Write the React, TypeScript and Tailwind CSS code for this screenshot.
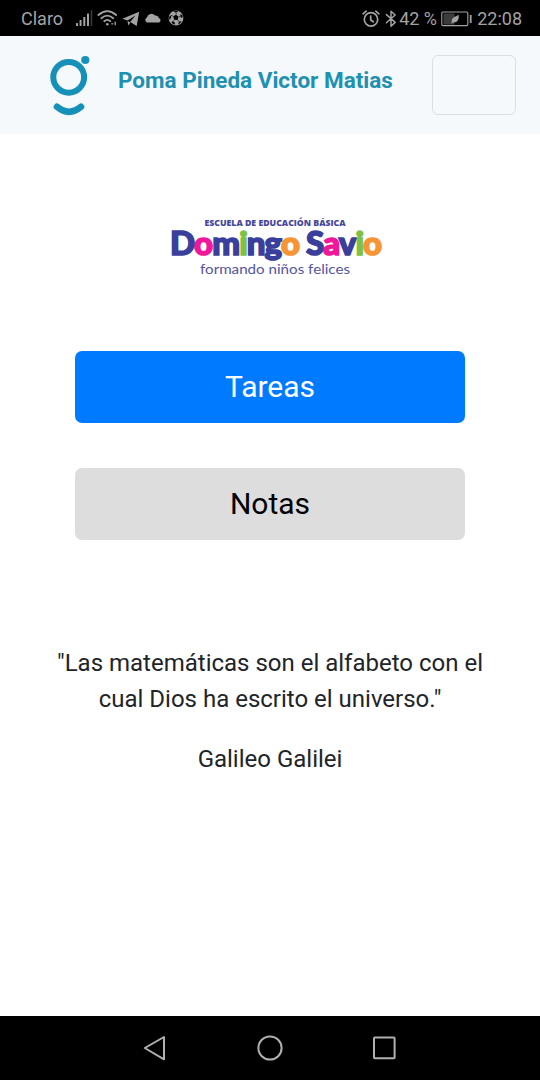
const SCHOOL_LETTERS = [
  { text: 'D', color: 'text-[#3a3f9b]' },
  { text: 'o', color: 'text-[#f0189a]' },
  { text: 'm', color: 'text-[#3a3f9b]' },
  { text: 'i', color: 'text-[#7cc243]' },
  { text: 'ng', color: 'text-[#3a3f9b]' },
  { text: 'o', color: 'text-[#f79433]' },
  { text: ' S', color: 'text-[#3a3f9b]' },
  { text: 'a', color: 'text-[#f0189a]' },
  { text: 'v', color: 'text-[#3a3f9b]' },
  { text: 'i', color: 'text-[#7cc243]' },
  { text: 'o', color: 'text-[#f79433]' },
]

function SignalIcon() {
  return (
    <svg width="18" height="18" viewBox="0 0 18 18" fill="currentColor">
      <rect x="1" y="14" width="2" height="3" rx=".5" />
      <rect x="4.6" y="11" width="2" height="6" rx=".5" />
      <rect x="8.3" y="8" width="2" height="9" rx=".5" />
      <rect x="12" y="4.5" width="2" height="12.5" rx=".5" />
      <rect x="15.7" y="1" width="1.6" height="16" rx=".5" opacity=".35" />
    </svg>
  )
}

function WifiIcon() {
  return (
    <svg width="21" height="18" viewBox="0 0 21 18" fill="none" stroke="currentColor" strokeWidth="1.8" strokeLinecap="round">
      <path d="M1.4 6 Q10.3 -1.8 19.2 6" />
      <path d="M4.4 9.2 Q10.3 4 16.2 9.2" />
      <path d="M7.3 12.2 Q10.3 9.6 13.3 12.2" />
      <circle cx="10.3" cy="15.2" r="1.3" fill="currentColor" stroke="none" />
      <path d="M14.8 14.8 h1 M18.2 13.2 v2.6" strokeWidth="1.3" />
    </svg>
  )
}

function TelegramIcon() {
  return (
    <svg width="18" height="16" viewBox="0 0 18 16" fill="currentColor">
      <path d="M.4 7.7 17.2.7 14.7 15 8.2 10.9 13.4 4.6 5.6 9.6z" />
      <path d="M5.6 9.9 8.4 11.4 6.2 14.6z" />
    </svg>
  )
}

function CloudIcon() {
  return (
    <svg width="18" height="10" viewBox="0 0 18 10" fill="currentColor">
      <path d="M3 9.5A2.7 2.7 0 0 1 2.9 4.5 4.6 4.6 0 0 1 11 2.5a3.2 3.2 0 0 1 3.8 2.6A2.3 2.3 0 0 1 15 9.5z" />
    </svg>
  )
}

function BallIcon() {
  return (
    <svg width="16" height="16" viewBox="0 0 16 16">
      <circle cx="8" cy="8" r="7.4" fill="currentColor" />
      <g fill="#000">
        <path d="M5.2 6.2 8.1 4.8 10.5 6.8 9.6 9.9 6.2 9.8z" />
        <path d="M5 1.6 8 2.4 10.5 1.2 8 .8zM12.3 4.1 14.7 5.5 14.2 8.2 12.4 6.8zM11 11.8 13.5 11 12.2 13.3 10 14.4zM4.2 11.3 7 12.6 6.6 14.7 3.5 13zM1 7 2.8 5.2 3.2 7.8 1.5 10z" />
      </g>
      <path d="M8.1 4.8V2.4M10.5 6.8 12.4 6.8M9.6 9.9 11 11.8M6.2 9.8 5 11.6M5.2 6.2 2.8 5.2" stroke="#000" strokeWidth=".6" />
    </svg>
  )
}

function AlarmIcon() {
  return (
    <svg width="18" height="18" viewBox="0 0 18 18" fill="none" stroke="currentColor" strokeWidth="1.7" strokeLinecap="round">
      <circle cx="9" cy="9.4" r="6.7" />
      <path d="M8.7 6v4l2.6 1.8" />
      <path d="M1.1 3.8 4.2 1.2M13.8 1.2 16.9 3.8" />
    </svg>
  )
}

function BluetoothIcon() {
  return (
    <svg width="12" height="18" viewBox="0 0 12 18" fill="none" stroke="currentColor" strokeWidth="1.5" strokeLinejoin="round" strokeLinecap="round">
      <path d="M1.4 4.6 10.2 12.4 6 16.2V1.2l4.2 3.8L1.4 12.8" />
    </svg>
  )
}

function BatteryIcon() {
  return (
    <svg width="32" height="16" viewBox="0 0 32 16">
      <rect x="2.5" y="2.5" width="11" height="11" fill="#3c3c3c" />
      <rect x=".8" y="1" width="26" height="13.6" rx="1" fill="none" stroke="currentColor" strokeWidth="1.1" />
      <rect x="28.8" y="4" width="1.8" height="8" fill="currentColor" />
      <path d="M17.6 3.8c.8 4.8-1.2 7.9-5.2 7.7l-1.6 1.1-.5-.6.6-1.2c-1-3.8 3.4-5 6.7-7z" fill="currentColor" />
    </svg>
  )
}

function StatusBar() {
  return (
    <div className="flex h-9 items-center bg-black pt-px text-[18px] text-[#a3a3a3]">
      <span className="ml-[21px] w-[54px]">Claro</span>
      <span className="-mt-0.5"><SignalIcon /></span>
      <span className="-mt-0.5 ml-[4px]"><WifiIcon /></span>
      <span className="ml-[4px]"><TelegramIcon /></span>
      <span className="-mt-0.5 ml-[4px]"><CloudIcon /></span>
      <span className="-mt-0.5 ml-[6px]"><BallIcon /></span>
      <div className="ml-auto flex items-center pr-[18px]">
        <AlarmIcon />
        <span className="ml-[5px]"><BluetoothIcon /></span>
        <span className="ml-[2px] w-[42px] whitespace-nowrap">42 %</span>
        <BatteryIcon />
        <span className="ml-[4px]">22:08</span>
      </div>
    </div>
  )
}

function Header() {
  return (
    <header className="flex h-[98px] items-start border-b border-[#f8f8f8] bg-[#f5f9fc] pr-6">
      <svg className="ml-[48px] mt-[18px]" width="44" height="64" viewBox="48 54 44 64" fill="none" stroke="#1590b9" strokeWidth="6">
        <circle cx="68.7" cy="77.3" r="15.4" />
        <circle cx="85.3" cy="60" r="4.1" fill="#1590b9" stroke="none" />
        <path d="M57 106.8 Q69 116.8 81 106.8" strokeLinecap="round" strokeWidth="6.6" />
      </svg>
      <h1 className="ml-[26px] mt-[27px] whitespace-nowrap text-[22.5px] font-bold leading-[34px] text-[#2090b0]">
        Poma Pineda Victor Matias
      </h1>
      <button className="ml-auto mt-[19px] h-[60px] w-[84px] rounded-[6px] border border-[#d9dfe4]" aria-label="Menú" />
    </header>
  )
}

function SchoolLogo() {
  return (
    <div className="ml-[170px] mt-[80px] flex h-[64px] w-[213px] flex-col whitespace-nowrap">
      <svg className="overflow-visible" width="213" height="14" viewBox="170 214 213 14">
        <text x="204.5" y="226.3" fontSize="9" fontWeight="800" fill="#46479d" fontFamily="'Open Sans', sans-serif" textLength="141" lengthAdjust="spacingAndGlyphs">
          ESCUELA DE EDUCACIÓN BÁSICA
        </text>
      </svg>
      <p className="h-[34px] font-['Lato',sans-serif] text-[33px] font-black leading-[28px] tracking-[-0.9px] [-webkit-text-stroke-width:1.6px]">
        {SCHOOL_LETTERS.map((l, i) => (
          <span key={i} className={l.color}>{l.text}</span>
        ))}
      </p>
      <svg className="overflow-visible" width="213" height="16" viewBox="170 262 213 16">
        <text x="200" y="273.5" fontSize="12.5" fill="#54559f" fontFamily="Lato, sans-serif" textLength="150" lengthAdjust="spacingAndGlyphs">
          formando niños felices
        </text>
      </svg>
    </div>
  )
}

function NavBar() {
  return (
    <nav className="flex h-16 items-center justify-between bg-black px-[142px] text-[#b0b0b0]">
      <svg width="26" height="28" viewBox="0 0 26 28" fill="none" stroke="currentColor" strokeWidth="2" strokeLinejoin="round">
        <path d="M2.8 14 22 3v22.3z" />
      </svg>
      <svg width="28" height="28" viewBox="0 0 28 28" fill="none" stroke="currentColor" strokeWidth="2">
        <circle cx="14" cy="14" r="11.6" />
      </svg>
      <svg width="26" height="28" viewBox="0 0 26 28" fill="none" stroke="currentColor" strokeWidth="2">
        <rect x="2" y="3.6" width="20.6" height="20.6" rx=".8" />
      </svg>
    </nav>
  )
}

export default function App() {
  return (
    <div className="flex h-[1080px] w-[540px] flex-col overflow-hidden bg-white font-['Roboto',sans-serif]">
      <StatusBar />
      <Header />
      <main className="flex flex-1 flex-col">
        <SchoolLogo />
        <div className="mt-[73px] flex flex-col gap-[45px] px-[75px] text-[30px]">
          <button className="h-[72px] rounded-[7px] bg-[#007bff] pb-0.5 text-white">Tareas</button>
          <button className="h-[72px] rounded-[7px] bg-[#dddddd] pb-0.5 text-black">Notas</button>
        </div>
        <div className="mt-[105px] px-[45px] text-center text-[24px] leading-9 text-[#212529]">
          <p>"Las matemáticas son el alfabeto con el cual Dios ha escrito el universo."</p>
          <p className="mt-6">Galileo Galilei</p>
        </div>
      </main>
      <NavBar />
    </div>
  )
}
